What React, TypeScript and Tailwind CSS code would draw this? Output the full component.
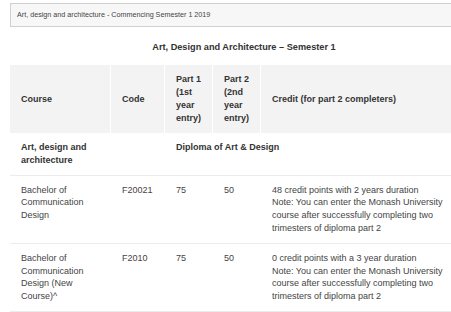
import React from "react";

const cols = "grid grid-cols-[100px_53px_47px_47px_217px] gap-x-[1px]";

export default function App() {
  return (
    <div
      className="w-[451px] h-[312px] overflow-hidden bg-white"
      style={{ fontFamily: '"Liberation Sans", Arial, Helvetica, sans-serif' }}
    >
      <div className="ml-[10px] w-[468px] pt-[3px]">
        <div className="h-[24px] border border-[#d0d0d0] bg-[#f7f7f7] px-[6px] flex items-center text-[7.2px] text-[#444]">
          Art, design and architecture - Commencing Semester 1 2019
        </div>
        <div className="h-[38px] pt-[4px] flex items-center justify-center font-bold text-[9.2px] text-[#333]">
          Art, Design and Architecture – Semester 1
        </div>
        <div className="text-[9px] leading-[12.8px]">
          <div className={`${cols} bg-white font-bold text-[#333]`}>
            <div className="bg-[#f3f3f3] h-[68px] pl-[11px] pr-[6px] flex items-center">Course</div>
            <div className="bg-[#f3f3f3] h-[68px] pl-[11px] pr-[6px] flex items-center">Code</div>
            <div className="bg-[#f3f3f3] h-[68px] pl-[11px] pr-[6px] flex items-center">
              <span>Part 1 (1st year entry)</span>
            </div>
            <div className="bg-[#f3f3f3] h-[68px] pl-[11px] pr-[6px] flex items-center">
              <span>Part 2 (2nd year entry)</span>
            </div>
            <div className="bg-[#f3f3f3] h-[68px] pl-[11px] pr-[6px] flex items-center">
              Credit (for part 2 completers)
            </div>
          </div>
          <div className={`${cols} border-b border-[#ececec] font-bold text-[#333]`}>
            <div className="pl-[11px] pr-[6px] py-[8px]">Art, design and architecture</div>
            <div className="pl-[11px] pr-[6px] py-[8px]"></div>
            <div className="col-span-3 pl-[11px] pr-[6px] py-[8px]">Diploma of Art &amp; Design</div>
          </div>
          <div className={`${cols} border-b border-[#ececec] text-[#444]`}>
            <div className="pl-[11px] pr-[11px] py-[8px]">Bachelor of Communication Design</div>
            <div className="pl-[11px] pr-[6px] py-[8px]">F20021</div>
            <div className="pl-[11px] pr-[6px] py-[8px]">75</div>
            <div className="pl-[11px] pr-[6px] py-[8px]">50</div>
            <div className="pl-[11px] pr-[11px] py-[8px]">
              48 credit points with 2 years duration
              <br />
              Note: You can enter the Monash University course after successfully completing two
              trimesters of diploma part 2
            </div>
          </div>
          <div className={`${cols} border-b border-[#ececec] text-[#444]`}>
            <div className="pl-[11px] pr-[11px] py-[8px]">Bachelor of Communication Design (New Course)^</div>
            <div className="pl-[11px] pr-[6px] py-[8px]">F2010</div>
            <div className="pl-[11px] pr-[6px] py-[8px]">75</div>
            <div className="pl-[11px] pr-[6px] py-[8px]">50</div>
            <div className="pl-[11px] pr-[11px] py-[8px]">
              0 credit points with a 3 year duration
              <br />
              Note: You can enter the Monash University course after successfully completing two
              trimesters of diploma part 2
            </div>
          </div>
        </div>
      </div>
    </div>
  );
}
